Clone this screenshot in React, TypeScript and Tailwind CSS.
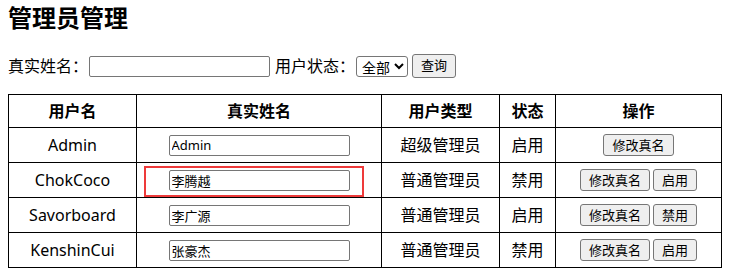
import React from 'react';

interface UserRow {
    username: string;
    realName: string;
    type: string;
    enabled: boolean;
    isSuper?: boolean;
    highlight?: boolean;
}

const users: UserRow[] = [
    { username: 'Admin', realName: 'Admin', type: '超级管理员', enabled: true, isSuper: true },
    { username: 'ChokCoco', realName: '李腾越', type: '普通管理员', enabled: false, highlight: true },
    { username: 'Savorboard', realName: '李广源', type: '普通管理员', enabled: true },
    { username: 'KenshinCui', realName: '张豪杰', type: '普通管理员', enabled: false },
];

const btn =
    'h-[22px] px-[8px] text-[13px] leading-none text-black bg-[#efefef] border border-[#767676] rounded-[3px] align-middle';

const App: React.FC = () => {
    return (
        <div
            className="w-[729px] h-[272px] bg-white text-black px-[8px] overflow-hidden"
            style={{ fontFamily: '"Noto Sans", "Noto Sans CJK SC", sans-serif' }}
        >
            <h1 className="text-[24px] font-bold leading-[36px] m-0">管理员管理</h1>

            <div className="mt-[18px] h-[24px] flex items-center text-[16px]">
                <span>真实姓名：</span>
                <input
                    type="text"
                    className="ml-[1px] w-[181px] h-[21px] border border-[#767676] rounded-[2px] px-[2px] text-[13px]"
                />
                <span className="ml-[5px]">用户状态：</span>
                <select className="ml-[1px] w-[52px] h-[21px] border border-[#767676] rounded-[3px] text-[14px] px-[1px]">
                    <option>全部</option>
                </select>
                <button className="ml-[4px] h-[24px] px-[8px] text-[13px] bg-[#efefef] border border-[#767676] rounded-[3px]">
                    查询
                </button>
            </div>

            <table className="mt-[16px] w-[714px] border-collapse border border-black table-fixed text-[16px]">
                <colgroup>
                    <col className="w-[128px]" />
                    <col className="w-[245px]" />
                    <col className="w-[118px]" />
                    <col className="w-[56px]" />
                    <col />
                </colgroup>
                <thead>
                    <tr className="h-[33px]">
                        {['用户名', '真实姓名', '用户类型', '状态', '操作'].map((h) => (
                            <th key={h} className="border border-black font-bold text-center p-0">
                                {h}
                            </th>
                        ))}
                    </tr>
                </thead>
                <tbody>
                    {users.map((u) => (
                        <tr key={u.username} className="h-[35px]">
                            <td className="border border-black text-center p-0">{u.username}</td>
                            <td className="border border-black p-0">
                                <div className="relative h-[34px] flex items-center justify-center">
                                    {u.highlight && (
                                        <div className="absolute left-[7px] right-[17px] top-[3px] bottom-[0px] border-2 border-[#ee3a3a]" />
                                    )}
                                    <input
                                        type="text"
                                        defaultValue={u.realName}
                                        className="relative w-[181px] h-[21px] border border-[#767676] rounded-[2px] px-[2px] text-[13px]"
                                    />
                                </div>
                            </td>
                            <td className="border border-black text-center p-0">{u.type}</td>
                            <td className="border border-black text-center p-0">{u.enabled ? '启用' : '禁用'}</td>
                            <td className="border border-black text-center p-0">
                                <div className="flex items-center justify-center gap-[3px]">
                                    <button className={btn}>修改真名</button>
                                    {!u.isSuper && <button className={btn}>{u.enabled ? '禁用' : '启用'}</button>}
                                </div>
                            </td>
                        </tr>
                    ))}
                </tbody>
            </table>
        </div>
    );
};

export default App;
